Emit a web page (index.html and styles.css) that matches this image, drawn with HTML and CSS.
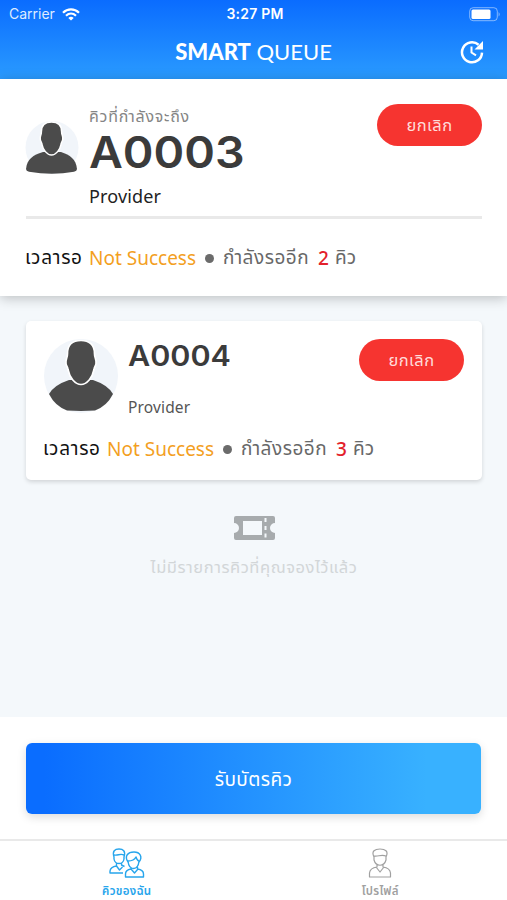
FILE: index.html
```html
<!DOCTYPE html>
<html lang="th">
<head>
<meta charset="utf-8">
<meta name="viewport" content="width=device-width, initial-scale=1">
<title>Smart Queue</title>
<link rel="stylesheet" href="styles.css">
</head>
<body>
<svg class="defs" width="0" height="0" aria-hidden="true">
  <symbol id="head" viewBox="0 0 32 44" overflow="visible"><path d="M16 0C8 0 2.500 4 2.500 13c0 5-2 5-1.500 10 .3 3 1.700 3 2 6 1.500 8 7 15 13 15s11.500-7 13-15c.3-3 1.700-3 2-6 .5-5-1.500-5-1.500-10C29.500 4 24 0 16 0Z"/></symbol>
</svg>
<div class="app">
  <header class="header">
    <div class="status">
      <div class="carrier"><span class="carrier-name">Carrier</span>
        <svg width="18" height="13" viewBox="0 0 18 13" fill="none" stroke="#fff" stroke-width="2.2"><path d="M1 4.7C5.5.2 12.500.2 17 4.700M4 7.700c3-2.800 7-2.800 10 0"/><path d="M9 12.500 6.300 9.900q2.700-2.100 5.400 0Z" fill="#fff" stroke="none"/></svg>
      </div>
      <span class="time">3:27 PM</span>
      <svg class="battery" width="32" height="15" viewBox="0 0 32 15"><rect x=".7" y=".7" width="27.600" height="13" rx="3.500" fill="none" stroke="#fff" stroke-opacity=".48"/><rect x="2.500" y="2.500" width="19" height="9.500" rx="1.500" fill="#fff"/><path d="M29.600 5v4.500q2.200-2.200 0-4.500Z" fill="#fff" fill-opacity=".5"/></svg>
    </div>
    <div class="titlebar">
      <h1 class="title"><b>SMART</b> QUEUE</h1>
      <svg class="refresh" width="24" height="24" viewBox="0 0 24 24" fill="none" stroke="#fff"><path d="M18.600 4.800A10 10 0 1 0 22 12.600" stroke-width="2.500"/><path d="M23 1v8.500h-8.500Z" fill="#fff" stroke="none"/><path d="M11.500 6.500v6l4.500 2.800" stroke-width="2"/></svg>
    </div>
  </header>

  <section class="current">
    <div class="current-main">
      <svg class="avatar-sm" width="54" height="54" viewBox="0 0 54 54"><circle cx="27" cy="26.500" r="26.500" fill="#f1f5fa"/><g fill="#4b4b4b"><path d="M18 31C8 34 2 38 1 48q0 2 3 2.700 23 4 45 0 3-.7 3-2.700C51 38 45 34 36 31Z"/><use href="#head" x="14.500" y="1" width="24" height="33" stroke="#fff" stroke-width="2"/></g></svg>
      <div class="info">
        <div class="label"><span>คิวที่กำลังจะถึง</span></div>
        <div class="number-lg">A0003</div>
        <div class="provider-lg">Provider</div>
      </div>
      <button class="cancel"><span>ยกเลิก</span></button>
    </div>
    <p class="wait"><span class="w-label">เวลารอ</span><span class="w-status">Not Success</span><i class="dot"></i><span class="w-left">กำลังรออีก</span><span class="w-count">2</span><span class="w-unit">คิว</span></p>
  </section>

  <main class="list">
    <article class="card">
      <div class="card-main">
        <svg class="avatar-lg" width="74" height="74" viewBox="0 0 74 74"><circle cx="37" cy="37" r="37" fill="#f1f5fa"/><g fill="#4b4b4b"><path d="M25 41Q10 46 5 55q6 12 18 16.500 14 .8 28 0 12-4.500 18-16.500-5-9-20-14Z"/><use href="#head" x="21" y="1" width="32" height="45" stroke="#fff" stroke-width="1.700"/></g></svg>
        <div class="info">
          <div class="number">A0004</div>
          <div class="provider">Provider</div>
        </div>
        <button class="cancel"><span>ยกเลิก</span></button>
      </div>
      <p class="wait"><span class="w-label">เวลารอ</span><span class="w-status">Not Success</span><i class="dot"></i><span class="w-left">กำลังรออีก</span><span class="w-count">3</span><span class="w-unit">คิว</span></p>
    </article>
    <div class="empty">
      <svg width="41" height="24" viewBox="0 0 41 24"><path fill="#a7abad" fill-rule="evenodd" d="M2 0h37q2 0 2 2v5a5 5 0 0 0 0 10v5q0 2-2 2H2q-2 0-2-2v-5a5 5 0 0 0 0-10V2Q0 0 2 0ZM9 5v14h19V5ZM30.500 2v4h2V2ZM30.500 10v4h2v-4ZM30.500 17.500v4h2v-4Z"/></svg>
      <p class="empty-text"><span>ไม่มีรายการคิวที่คุณจองไว้แล้ว</span></p>
    </div>
  </main>

  <div class="action"><button class="primary"><span>รับบัตรคิว</span></button></div>

  <nav class="tabs">
    <a class="tab active">
      <svg width="36" height="30" viewBox="0 0 36 30" fill="none" stroke="currentColor" stroke-width="1.400" stroke-linejoin="round"><path d="M5 9c-2-6 1-8 5-8s7 2 5 8v2c-1 6-9 6-10 0ZM5 7c4 1 6-2 10 0M7.500 15v3q-6 1-6.500 5v2h13M12.500 15v2l3 1.500M7.500 18l3 4 3-3"/><path d="M19 14c-4-6 0-10 6-10s9 5 5 10M19 13c4 0 7-2 8-4 1 3 2 4 3 4-1 10-10 10-11 0ZM22 19v2q-5.500 1-5.500 5v3h18v-3q0-4-6-5v-2M22 21l3.500 4 3.500-4"/></svg>
      <span class="tab-label">คิวของฉัน</span>
    </a>
    <a class="tab">
      <svg width="26" height="30" viewBox="0 0 26 30" fill="none" stroke="currentColor" stroke-width="1.200" stroke-linejoin="round"><path d="M7 9C4 3 8 1 13 1s9 2 6 8M7 8c4 1 7-2 12 0v4c-2 7-10 7-12 0ZM10 16v3q-7 1-7.500 6v4h21v-4q-.5-5-7.500-6v-3M9 19l4 5 4-5"/></svg>
      <span class="tab-label">โปรไฟล์</span>
    </a>
  </nav>
</div>
</body>
</html>
```
FILE: styles.css
```css
* { box-sizing: border-box; }
body { margin: 0; font-family: "Noto Sans", "Noto Sans Thai", "Open Sans", sans-serif; }
.defs { position: absolute; }
h1, p { margin: 0; font-weight: 400; }
button { border: 0; padding: 0; font: inherit; color: #fff; }
svg { display: block; flex: none; }
.app { width: 507px; height: 900px; display: flex; flex-direction: column; overflow: hidden; background: #fff; }
.header { height: 79px; flex: none; color: #fff; background: linear-gradient(#0a6cff, #2a9bff); }
.status { height: 28px; display: grid; grid-template-columns: 1fr auto 1fr; align-items: center; padding: 0 6px 0 9px; font: 14px/28px Inter, sans-serif; }
.carrier { display: flex; align-items: center; gap: 7px; }
.carrier-name { width: 46px; color: #deebff; white-space: nowrap; }
.time { font-weight: 600; font-size: 14px; letter-spacing: .2px; }
.battery { justify-self: end; }
.titlebar { height: 51px; display: grid; grid-template-columns: 1fr auto 1fr; align-items: center; padding: 0 23px 4px; }
.title { grid-column: 2; font: 400 22px/30px Lato, sans-serif; white-space: nowrap; }
.title b { font-weight: 900; }
.refresh { justify-self: end; }
.current { height: 217px; flex: none; padding: 25px 25px 0 26px; box-shadow: 0 2px 12px rgba(0,0,0,.24); position: relative; }
.current-main { display: flex; height: 115px; border-bottom: 3px solid #e9e9e9; }
.avatar-sm { margin: 17px 10px 0 -1px; }
.info { flex: 1; white-space: nowrap; }
.label { height: 23px; font-size: 16px; line-height: 24px; letter-spacing: .75px; color: #858585; }
.number-lg { height: 48px; font: 600 43.500px/50px Inter, sans-serif; color: #3b3b3b; transform: scaleX(1.07); transform-origin: left; }
.provider-lg { font-size: 18px; line-height: 42px; letter-spacing: .15px; color: #222; }
.cancel { width: 105px; height: 42px; border-radius: 21px; background: #f63430; font-size: 16.500px; letter-spacing: .5px; }
.cancel span { color: #ffdcda; }
.wait { display: flex; align-items: center; height: 30px; font-size: 19px; white-space: nowrap; color: #686868; margin-left: -1px; }
.current .wait { margin-top: 24px; }
.w-label { width: 64px; color: #111; letter-spacing: .7px; }
.w-status { width: 116px; color: #f3a01f; }
.dot { width: 9px; height: 9px; border-radius: 50%; background: #6b6b6b; flex: none; }
.w-left { width: 95px; margin-left: 9px; letter-spacing: .5px; }
.w-count { width: 17px; color: #e3212b; font-weight: 500; }
.list { flex: 1; padding: 25px 25px 0 26px; background: #f4f8fb; }
.card { height: 159px; padding: 18px 18px 0; border-radius: 5px; background: #fff; box-shadow: 0 2px 4px rgba(0,0,0,.14); }
.card-main { display: flex; height: 95px; }
.avatar-lg { margin-right: 10px; }
.number { height: 34px; font: 600 28px/34px Inter, sans-serif; color: #3b3b3b; transform: scaleX(1.09); transform-origin: left; }
.provider { font-size: 15.500px; line-height: 68px; letter-spacing: .15px; color: #555; }
.empty { display: flex; flex-direction: column; align-items: center; padding-top: 36px; }
.empty-text { margin-top: 12px; font-size: 16.500px; line-height: 30px; letter-spacing: .55px; color: #d2d6d8; white-space: nowrap; }
.action { height: 122px; flex: none; padding: 26px; }
.primary { width: 455px; height: 71px; padding-top: 3px; border-radius: 6px; background: linear-gradient(90deg, #0a6dff 4%, #38b1ff 88%); box-shadow: 0 3px 10px rgba(0,0,0,.14); font-size: 19px; letter-spacing: .4px; }
.tabs { height: 61px; flex: none; display: grid; grid-template-columns: 1fr 1fr; border-top: 2px solid #e9e9e9; }
.tab { display: flex; flex-direction: column; align-items: center; padding-top: 7px; color: #a0a0a0; }
.active { color: #27a5ec; }
.tab-label { font-size: 11.500px; line-height: 26px; font-weight: 600; letter-spacing: .3px; }
```
